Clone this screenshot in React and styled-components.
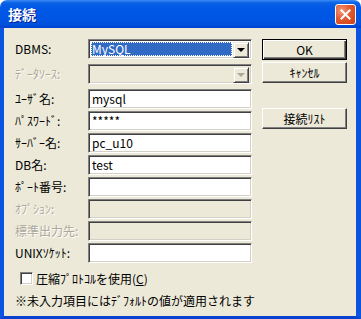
import React from 'react';
import styled, { createGlobalStyle } from 'styled-components';

const GlobalStyle = createGlobalStyle`
  html, body {
    margin: 0;
    padding: 0;
    background: #fff;
  }
  body {
    font-family: "Noto Sans CJK JP", "DejaVu Sans", sans-serif;
    font-size: 12px;
  }
`;

const Window = styled.div`
  width: 361px;
  height: 319px;
  display: flex;
  flex-direction: column;
  overflow: hidden;
  border-radius: 7px 7px 0 0;
`;

const TitleBar = styled.div`
  height: 28px;
  flex: 0 0 28px;
  display: flex;
  align-items: center;
  justify-content: space-between;
  padding: 0 5px 1px 8px;
  box-sizing: border-box;
  background: linear-gradient(to bottom, #3d8cf5 0%, #0a62e6 10%, #0058e6 30%, #0055e3 70%, #0050dc 88%, #003fcf 100%);
`;

const Title = styled.span`
  color: #fff;
  font-weight: bold;
  font-size: 14px;
  line-height: 1;
  text-shadow: 1px 1px 0 #0a1e8c;
`;

const CloseButton = styled.div`
  width: 21px;
  height: 21px;
  box-sizing: border-box;
  border: 1px solid #fff;
  border-radius: 3px;
  background: radial-gradient(circle at 30% 30%, #f19a7b 0%, #e2592f 45%, #cd3f18 100%);
  display: flex;
  align-items: center;
  justify-content: center;
  margin-top: 1px;
`;

const Frame = styled.div`
  flex: 1;
  display: flex;
  border-left: 4px solid #0a55e0;
  border-right: 5px solid #0a55e0;
  border-bottom: 3px solid #0a42d0;
`;

const Body = styled.div`
  flex: 1;
  background: #ece9d8;
  padding: 11px 9px 0 11px;
  display: flex;
  flex-direction: column;
`;

const Main = styled.div`
  display: flex;
  gap: 10px;
`;

const Form = styled.div`
  display: flex;
  flex-direction: column;
`;

const Row = styled.div`
  display: flex;
  align-items: center;
  height: 20px;
  margin-bottom: ${({ gap }) => gap}px;
`;

const Label = styled.span`
  width: 73px;
  line-height: 1;
  color: ${({ disabled }) => (disabled ? '#aca899' : '#000')};
  text-shadow: ${({ disabled }) => (disabled ? '1px 1px 0 #fff' : 'none')};
  white-space: nowrap;
`;

const sunken = `
  box-sizing: border-box;
  border-top: 1px solid #808080;
  border-left: 1px solid #808080;
  border-bottom: 1px solid #fff;
  border-right: 1px solid #fff;
  box-shadow: inset 1px 1px 0 #404040, inset -1px -1px 0 #d4d0c8;
`;

const Edit = styled.div`
  ${sunken}
  width: 164px;
  height: 20px;
  background: ${({ disabled }) => (disabled ? '#ece9d8' : '#fff')};
  padding: 0 3px;
  display: flex;
  align-items: center;
  line-height: 1;
`;

const Combo = styled.div`
  ${sunken}
  width: 164px;
  height: 20px;
  background: ${({ disabled }) => (disabled ? '#ece9d8' : '#fff')};
  padding: 2px;
  display: flex;
  gap: 1px;
`;

const Selection = styled.div`
  flex: 1;
  background: #316ac5;
  color: #fff;
  outline: 1px dotted #fff;
  outline-offset: -1px;
  display: flex;
  align-items: center;
  padding-left: 1px;
  line-height: 1;
`;

const Spacer = styled.div`
  flex: 1;
`;

const ArrowButton = styled.div`
  width: 16px;
  height: 16px;
  box-sizing: border-box;
  background: #ece9d8;
  border-top: 1px solid #ece9d8;
  border-left: 1px solid #ece9d8;
  border-bottom: 1px solid #404040;
  border-right: 1px solid #404040;
  box-shadow: inset 1px 1px 0 #fff, inset -1px -1px 0 #808080;
  display: flex;
  align-items: center;
  justify-content: center;
  &::after {
    content: '';
    border-left: 4px solid transparent;
    border-right: 4px solid transparent;
    border-top: 4px solid ${({ disabled }) => (disabled ? '#aca899' : '#000')};
  }
`;

const Buttons = styled.div`
  display: flex;
  flex-direction: column;
`;

const Button = styled.div`
  width: 85px;
  height: 21px;
  box-sizing: border-box;
  margin-bottom: ${({ gap }) => gap || 0}px;
  background: #ece9d8;
  display: flex;
  align-items: center;
  justify-content: center;
  line-height: 1;
  border: 1px solid ${({ primary }) => (primary ? '#000' : '#ece9d8')};
  border-top-color: ${({ primary }) => (primary ? '#000' : '#fff')};
  border-left-color: ${({ primary }) => (primary ? '#000' : '#fff')};
  border-bottom-color: ${({ primary }) => (primary ? '#000' : '#404040')};
  border-right-color: ${({ primary }) => (primary ? '#000' : '#404040')};
  box-shadow: ${({ primary }) =>
    primary
      ? 'inset 1px 1px 0 #fff, inset -1px -1px 0 #404040, inset -2px -2px 0 #808080'
      : 'inset -1px -1px 0 #808080'};
`;

const CheckRow = styled.div`
  display: flex;
  align-items: center;
  gap: 3px;
  margin: 9px 0 0 5px;
  line-height: 1;
`;

const CheckBox = styled.div`
  ${sunken}
  width: 13px;
  height: 13px;
  background: #fff;
`;

const Note = styled.div`
  margin: 10px 0 0 0;
  line-height: 1;
  white-space: nowrap;
`;

const rows = [
  { label: 'DBMS:', type: 'combo', value: 'MySQL', gap: 5 },
  { label: 'ﾃﾞｰﾀｿｰｽ:', type: 'combo', disabled: true, gap: 5 },
  { label: 'ﾕｰｻﾞ名:', value: 'mysql', gap: 2 },
  { label: 'ﾊﾟｽﾜｰﾄﾞ:', value: '*****', gap: 2 },
  { label: 'ｻｰﾊﾞｰ名:', value: 'pc_u10', gap: 2 },
  { label: 'DB名:', value: 'test', gap: 2 },
  { label: 'ﾎﾟｰﾄ番号:', value: '', gap: 2 },
  { label: 'ｵﾌﾟｼｮﾝ:', disabled: true, gap: 2 },
  { label: '標準出力先:', disabled: true, gap: 2 },
  { label: 'UNIXｿｹｯﾄ:', value: '', gap: 0 },
];

export default function App() {
  return (
    <>
      <GlobalStyle />
      <Window>
        <TitleBar>
          <Title>接続</Title>
          <CloseButton>
            <svg width="11" height="11" viewBox="0 0 11 11">
              <path d="M1.5 1.5 L9.5 9.5 M9.5 1.5 L1.5 9.5" stroke="#fff" strokeWidth="2" strokeLinecap="square" />
            </svg>
          </CloseButton>
        </TitleBar>
        <Frame>
          <Body>
            <Main>
              <Form>
                {rows.map((r) => (
                  <Row key={r.label} gap={r.gap}>
                    <Label disabled={r.disabled}>{r.label}</Label>
                    {r.type === 'combo' ? (
                      <Combo disabled={r.disabled}>
                        {r.value ? <Selection>{r.value}</Selection> : <Spacer />}
                        <ArrowButton disabled={r.disabled} />
                      </Combo>
                    ) : (
                      <Edit disabled={r.disabled}>{r.value}</Edit>
                    )}
                  </Row>
                ))}
              </Form>
              <Buttons>
                <Button primary gap={2}>OK</Button>
                <Button gap={25}>ｷｬﾝｾﾙ</Button>
                <Button>接続ﾘｽﾄ</Button>
              </Buttons>
            </Main>
            <CheckRow>
              <CheckBox />
              <span>圧縮ﾌﾟﾛﾄｺﾙを使用(<u>C</u>)</span>
            </CheckRow>
            <Note>※未入力項目にはﾃﾞﾌｫﾙﾄの値が適用されます</Note>
          </Body>
        </Frame>
      </Window>
    </>
  );
}
